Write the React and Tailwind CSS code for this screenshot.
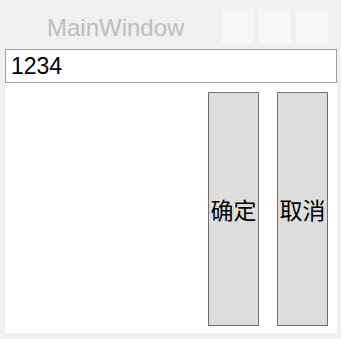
import React from 'react';

const App = () => {
    return (
        <div className="w-[341px] h-[339px] bg-[#f0f0f0] flex flex-col" style={{ fontFamily: '"Liberation Sans", "Noto Sans CJK SC", sans-serif' }}>
            <div className="h-[49px] flex items-start">
                <div className="pl-[47px] pt-[13px] text-[24px] leading-[30px] text-[#bdbdbd] w-[222px]">MainWindow</div>
                <div className="flex pt-[9px] gap-[5px]">
                    <div className="w-[32px] h-[35px] bg-[#f6f6f6]" />
                    <div className="w-[32px] h-[35px] bg-[#f6f6f6]" />
                    <div className="w-[32px] h-[35px] bg-[#f6f6f6]" />
                </div>
            </div>
            <div className="mx-[5px] w-[332px] h-[34px] border border-[#a0a0a0] bg-white flex items-center pl-[5px] text-[23px] text-black">
                1234
            </div>
            <div className="mx-[5px] w-[332px] h-[250px] bg-white flex justify-end gap-[18px] pt-[9px] pb-[7px] pr-[9px]">
                <button className="w-[51px] h-full bg-[#dddddd] border border-[#707070] flex items-center justify-center text-[23px] text-black" style={{ fontFamily: '"Noto Sans CJK SC", sans-serif' }}>
                    确定
                </button>
                <button className="w-[51px] h-full bg-[#dddddd] border border-[#707070] flex items-center justify-center text-[23px] text-black" style={{ fontFamily: '"Noto Sans CJK SC", sans-serif' }}>
                    取消
                </button>
            </div>
        </div>
    );
};

export default App;
